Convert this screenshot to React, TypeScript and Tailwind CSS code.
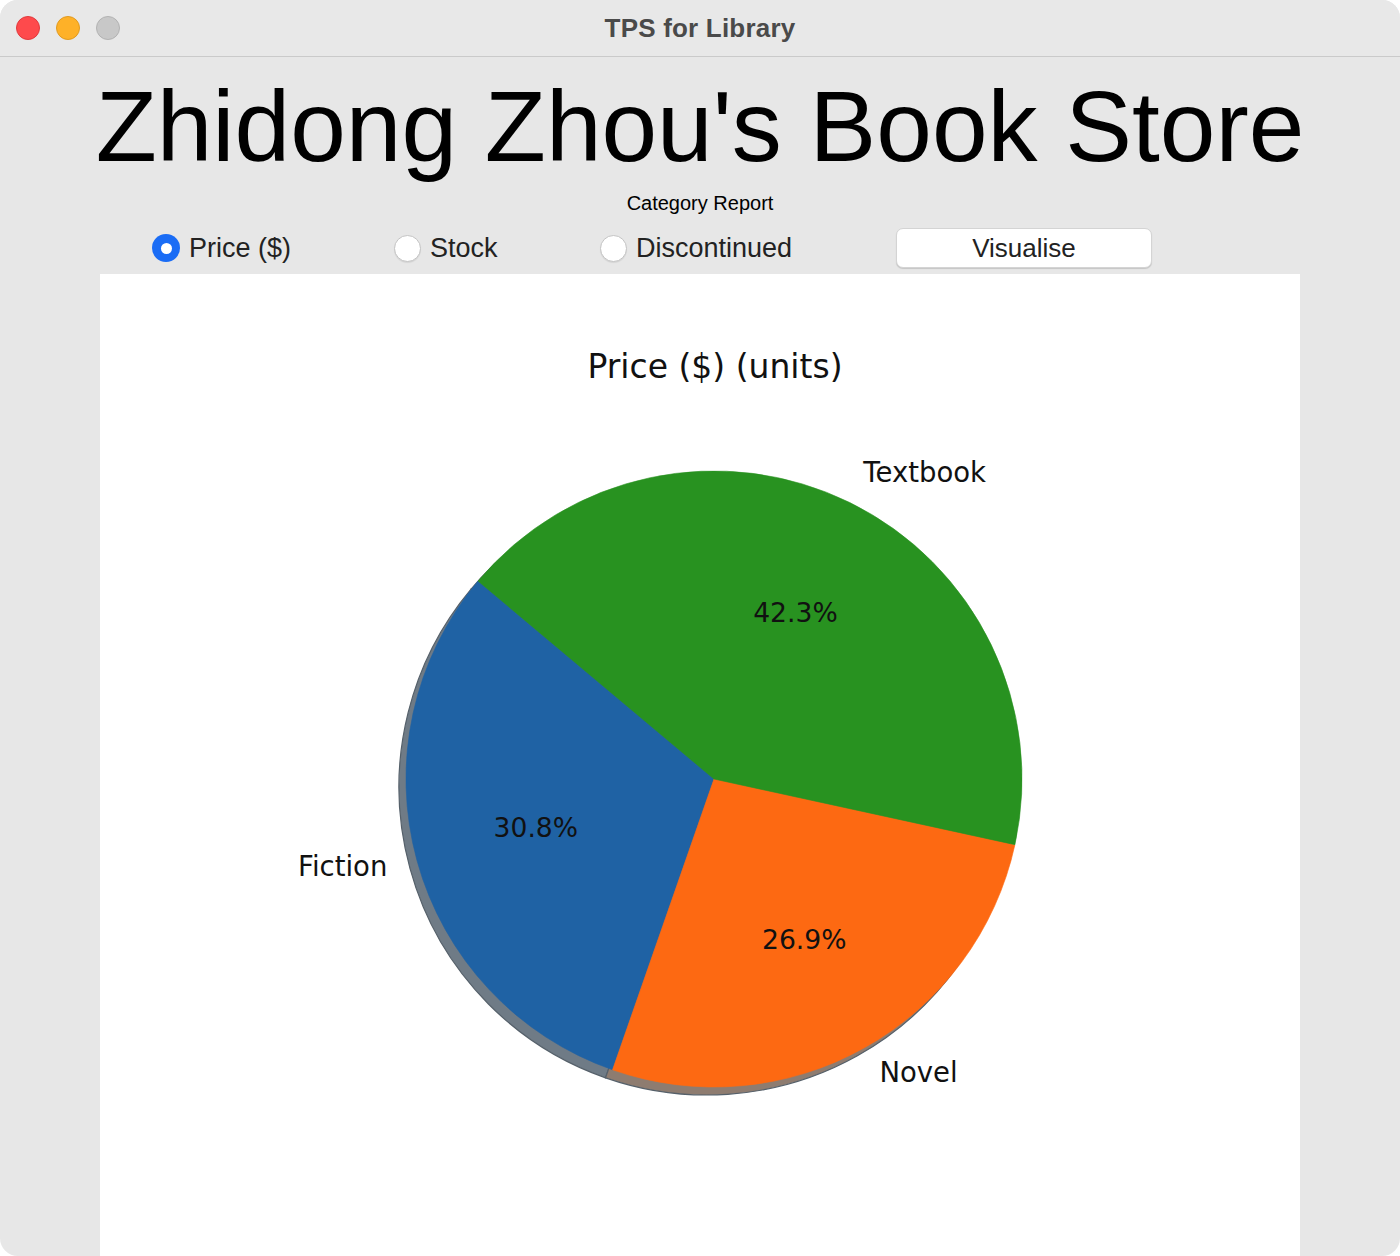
import React from "react";

const CX = 614;
const CY = 505;
const R = 308;

function pt(deg: number, r: number, cx = CX, cy = CY): [number, number] {
  const a = (deg * Math.PI) / 180;
  return [cx + r * Math.cos(a), cy - r * Math.sin(a)];
}

function wedge(a0: number, a1: number, cx = CX, cy = CY, r = R) {
  const [x0, y0] = pt(a0, r, cx, cy);
  const [x1, y1] = pt(a1, r, cx, cy);
  const large = a1 - a0 > 180 ? 1 : 0;
  return `M ${cx} ${cy} L ${x0} ${y0} A ${r} ${r} 0 ${large} 0 ${x1} ${y1} Z`;
}

const slices = [
  { label: "Fiction", v: 8, color: "#1f62a4", shadow: "#6f7b86" },
  { label: "Novel", v: 7, color: "#fd6912", shadow: "#8e7c70" },
  { label: "Textbook", v: 11, color: "#289220", shadow: "#748a72" },
];

function Pie() {
  const total = slices.reduce((s, x) => s + x.v, 0);
  let a = 140;
  const parts = slices.map((s) => {
    const span = (s.v / total) * 360;
    const a0 = a;
    const a1 = a + span;
    a = a1;
    const mid = (a0 + a1) / 2;
    return { ...s, a0, a1, mid, pct: ((s.v / total) * 100).toFixed(1) + "%" };
  });
  const font = "'DejaVu Sans', Verdana, sans-serif";
  return (
    <svg width="1200" height="982" viewBox="0 0 1200 982" className="block">
      <text x={615} y={104} textAnchor="middle" fontFamily={font} fontSize={33} fill="#111">
        Price ($) (units)
      </text>
      {parts.map((p) => (
        <path key={"s" + p.label} d={wedge(p.a0, p.a1, CX - 7, CY + 8)} fill={p.shadow} stroke="#55606a" strokeWidth={1.2} />
      ))}
      {parts.map((p) => (
        <path key={p.label} d={wedge(p.a0, p.a1)} fill={p.color} stroke={p.color} strokeWidth={0.6} />
      ))}
      {parts.map((p) => {
        const [lx, ly] = pt(p.mid, R * 1.1);
        const [px, py] = pt(p.mid, R * 0.6);
        const cos = Math.cos((p.mid * Math.PI) / 180);
        return (
          <g key={"t" + p.label}>
            <text
              x={lx}
              y={ly - 3}
              dominantBaseline="central"
              textAnchor={cos < 0 ? "end" : "start"}
              fontFamily={font}
              fontSize={27.5}
              fill="#111"
            >
              {p.label}
            </text>
            <text x={px} y={py - 1} dominantBaseline="central" textAnchor="middle" fontFamily={font} fontSize={26.6} fill="#111">
              {p.pct}
            </text>
          </g>
        );
      })}
    </svg>
  );
}

function Radio({ checked, label }: { checked?: boolean; label: string }) {
  return (
    <div className="flex items-center gap-[9px]">
      {checked ? (
        <div className="w-[28px] h-[28px] rounded-full bg-[#1a6cf5] flex items-center justify-center">
          <div className="w-[11px] h-[11px] rounded-full bg-white" />
        </div>
      ) : (
        <div className="w-[27px] h-[27px] rounded-full bg-white border border-[#c4c4c4] shadow-[0_1px_1px_rgba(0,0,0,0.08)]" />
      )}
      <span className="text-[27px] text-[#222] leading-none">{label}</span>
    </div>
  );
}

export default function App() {
  return (
    <div className="w-[1400px] h-[1256px] bg-white" style={{ fontFamily: "'Liberation Sans', Arial, sans-serif" }}>
      <div className="w-full h-full bg-[#e7e7e7] rounded-[18px] overflow-hidden flex flex-col">
        <div className="h-[57px] shrink-0 bg-[#e8e8e8] border-b border-[#cacaca] relative flex items-center justify-center">
          <div className="absolute left-[16px] top-[16px] flex gap-[16px]">
            <div className="w-[24px] h-[24px] rounded-full bg-[#fe4a4c] border border-[#e03a3d]" />
            <div className="w-[24px] h-[24px] rounded-full bg-[#feb128] border border-[#e09a20]" />
            <div className="w-[24px] h-[24px] rounded-full bg-[#c8c8c8] border border-[#b2b2b2]" />
          </div>
          <span className="text-[26px] font-bold text-[#4a4a4a] tracking-[0.2px]">TPS for Library</span>
        </div>
        <div className="flex flex-col items-center flex-1">
          <h1 className="text-[100px] leading-none text-black mt-[13px] h-[112px] pt-[6px]">Zhidong Zhou's Book Store</h1>
          <div className="text-[20px] text-black leading-none mt-[11px]">Category Report</div>
          <div className="w-[1200px] flex items-center h-[46px] mt-[12px]">
            <div className="pl-[52px] w-[294px]">
              <Radio checked label="Price ($)" />
            </div>
            <div className="w-[206px]">
              <Radio label="Stock" />
            </div>
            <div className="w-[296px]">
              <Radio label="Discontinued" />
            </div>
            <button className="w-[256px] h-[40px] bg-white rounded-[7px] border border-[#d4d4d4] shadow-[0_1px_1px_rgba(0,0,0,0.15)] text-[26px] text-[#222] leading-none">
              Visualise
            </button>
          </div>
          <div className="w-[1200px] flex-1 bg-white mt-[3px]">
            <Pie />
          </div>
        </div>
      </div>
    </div>
  );
}
